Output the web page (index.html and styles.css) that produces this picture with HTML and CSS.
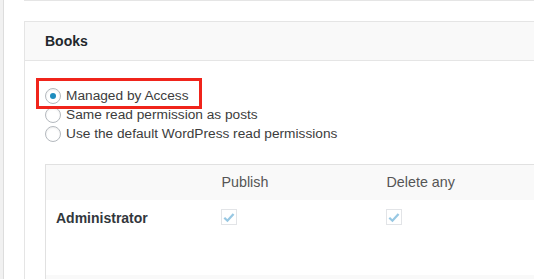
FILE: index.html
```html
<!DOCTYPE html>
<html>
<head>
  <title>Books - Access</title>
  <link rel="stylesheet" href="styles.css">
</head>
<body>
  <div class="wrap">
    <!-- previous box, only its bottom edge shows -->
    <div class="prev-box"></div>

    <div class="postbox">
      <h2 class="hndle">Books</h2>
      <div class="inside">
        <div class="options">
          <label class="opt"><span class="radio checked"></span>Managed by Access</label>
          <label class="opt"><span class="radio"></span>Same read permission as posts</label>
          <label class="opt"><span class="radio"></span>Use the default WordPress read permissions</label>
          <span class="highlight"></span>
        </div>

        <table class="caps">
          <colgroup>
            <col class="col-role">
            <col class="col-cap">
            <col>
          </colgroup>
          <tr class="head">
            <th></th>
            <th>Publish</th>
            <th>Delete any</th>
          </tr>
          <tr class="row">
            <td class="role">Administrator</td>
            <td><span class="check"><svg viewBox="0 0 16 16" width="15" height="15"><path d="M2.6 8.3 L6.2 11.7 L13.2 3.9" fill="none" stroke="#98c8e3" stroke-width="2.6"/></svg></span></td>
            <td><span class="check"><svg viewBox="0 0 16 16" width="15" height="15"><path d="M2.6 8.3 L6.2 11.7 L13.2 3.9" fill="none" stroke="#98c8e3" stroke-width="2.6"/></svg></span></td>
          </tr>
          <tr class="head">
            <td></td><td></td><td></td>
          </tr>
        </table>
      </div>
    </div>
  </div>
</body>
</html>
```

FILE: styles.css
```css
/* Base */
* {
  box-sizing: border-box;
}

html, body {
  margin: 0;
  padding: 0;
  height: 100%;
  overflow: hidden;
  background: #f1f1f1;
  font-family: 'Liberation Sans', Arial, sans-serif;
  color: #444;
}

.wrap {
  margin: 0 -120px 0 3px;
  height: 100%;
  background: #fff;
  border-left: 1px solid #ddd;
  padding-left: 20px;
}

.prev-box {
  height: 1px;
  border-left: 1px solid #e5e5e5;
  border-bottom: 1px solid #e5e5e5;
}

/* Books box */
.postbox {
  margin-top: 20px;
  border: 1px solid #e5e5e5;
  border-right: none;
  background: #fff;
}

.hndle {
  margin: 0;
  height: 39px;
  padding-left: 20px;
  line-height: 38px;
  font-size: 14px;
  font-weight: bold;
  color: #23282d;
  background: #f9f9f9;
  border-bottom: 1px solid #e5e5e5;
}

.inside {
  padding: 0 0 0 20px;
}

/* Radio options */
.options {
  position: relative;
  padding-top: 25px;
}

.opt {
  display: flex;
  align-items: center;
  height: 19px;
  font-size: 13.7px;
  color: #3c3c3c;
}

.radio {
  width: 16px;
  height: 16px;
  margin-right: 5px;
  border: 1px solid #b4b9be;
  border-radius: 50%;
  background: #fff;
  box-shadow: inset 0 1px 2px rgba(0, 0, 0, 0.07);
  display: flex;
  justify-content: center;
  align-items: center;
}

.radio.checked:after {
  content: "";
  width: 6px;
  height: 6px;
  border-radius: 50%;
  background: #1e8cbe;
}

.highlight {
  position: absolute;
  left: -9px;
  top: 17px;
  width: 166px;
  height: 31px;
  border: 3px solid #f0241b;
}

/* Capabilities table */
.caps {
  margin-top: 21px;
  width: 100%;
  border: 1px solid #e1e1e1;
  border-right: none;
  border-collapse: collapse;
  table-layout: fixed;
  font-size: 14px;
}

.col-role {
  width: 166px;
}

.col-cap {
  width: 165px;
}

.caps th {
  height: 35px;
  padding: 0 10px;
  text-align: left;
  font-weight: normal;
  font-size: 14.3px;
  color: #555;
  line-height: 35px;
}

.caps .head {
  background: #f9f9f9;
}

.caps .head td {
  height: 35px;
}

.caps .row td {
  height: 75px;
  padding: 8px 10px 0;
  vertical-align: top;
  line-height: 20px;
}

.role {
  font-weight: bold;
  color: #32373c;
}

.check {
  display: flex;
  justify-content: center;
  align-items: center;
  width: 16px;
  height: 16px;
  margin: 1px 0 0 -1px;
  border: 1px solid #e2e4e7;
  background: #fff;
}
```
